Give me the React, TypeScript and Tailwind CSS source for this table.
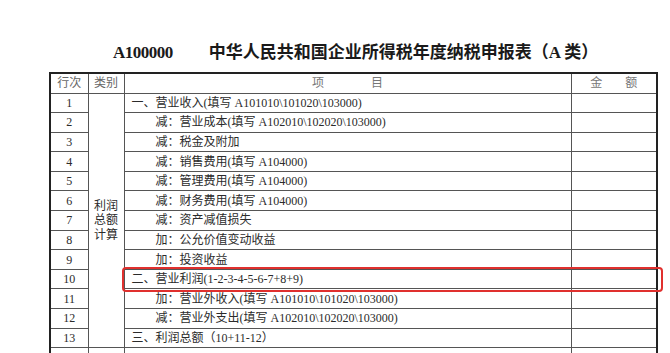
import React from 'react'

type Row = { no: number; text: string; indent?: boolean }

const rows: Row[] = [
    { no: 1, text: '一、营业收入(填写 A101010\\101020\\103000)' },
    { no: 2, text: '减：营业成本(填写 A102010\\102020\\103000)', indent: true },
    { no: 3, text: '减：税金及附加', indent: true },
    { no: 4, text: '减：销售费用(填写 A104000)', indent: true },
    { no: 5, text: '减：管理费用(填写 A104000)', indent: true },
    { no: 6, text: '减：财务费用(填写 A104000)', indent: true },
    { no: 7, text: '减：资产减值损失', indent: true },
    { no: 8, text: '加：公允价值变动收益', indent: true },
    { no: 9, text: '加：投资收益', indent: true },
    { no: 10, text: '二、营业利润(1-2-3-4-5-6-7+8+9)' },
    { no: 11, text: '加：营业外收入(填写 A101010\\101020\\103000)', indent: true },
    { no: 12, text: '减：营业外支出(填写 A102010\\102020\\103000)', indent: true },
    { no: 13, text: '三、利润总额（10+11-12）' },
]

export default function App() {
    return (
        <div className="relative h-[353px] w-[670px] overflow-hidden bg-white font-['Liberation_Serif','Noto_Sans_CJK_SC',serif] text-[#2b2b2b]">
            {/* title */}
            <div className="flex items-center gap-[36px] pl-[113px] pt-[43px] pb-[9px] leading-[20px] font-bold text-[#1a1a1a]">
                <span className="text-[17px] tracking-[-0.5px]">A100000</span>
                <span className="text-[17px]">中华人民共和国企业所得税年度纳税申报表（A 类）</span>
            </div>

            <table className="ml-[49px] w-[607px] table-fixed border-collapse border-2 border-[#222] text-[12px]">
                <colgroup>
                    <col className="w-[38px]" />
                    <col className="w-[36px]" />
                    <col className="w-[447px]" />
                    <col className="w-[86px]" />
                </colgroup>
                <thead>
                    <tr className="h-[20px] text-[#666]">
                        <th className="border border-[#555] p-0 font-normal">行次</th>
                        <th className="border border-[#555] p-0 font-normal">类别</th>
                        <th className="border border-[#555] p-0 font-normal text-[#777]">
                            <div className="flex justify-center gap-[47px]">
                                <span>项</span>
                                <span>目</span>
                            </div>
                        </th>
                        <th className="border border-[#555] p-0 font-normal text-[#777]">
                            <div className="flex justify-center gap-[23px]">
                                <span>金</span>
                                <span>额</span>
                            </div>
                        </th>
                    </tr>
                </thead>
                <tbody>
                    {rows.map((r, i) => (
                        <tr key={r.no} className="h-[19.6px]">
                            <td className="border border-[#555] p-0 text-center leading-none">{r.no}</td>
                            {i === 0 && (
                                <td rowSpan={13} className="border border-[#555] p-0 text-center align-middle leading-[14.5px]">
                                    利润<br />总额<br />计算
                                </td>
                            )}
                            <td className={`border border-[#555] py-0 pr-0 leading-none whitespace-nowrap ${r.indent ? 'pl-[31px]' : 'pl-[7px]'}`}>
                                {r.text}
                            </td>
                            <td className="border border-[#555] p-0"></td>
                        </tr>
                    ))}
                    <tr className="h-[19.6px]">
                        <td className="border border-[#555] p-0"></td>
                        <td className="border border-[#555] p-0"></td>
                        <td className="border border-[#555] p-0"></td>
                        <td className="border border-[#555] p-0"></td>
                    </tr>
                </tbody>
            </table>

            {/* highlight around row 10 */}
            <div className="absolute left-[122px] top-[267px] h-[25px] w-[541px] rounded-[4px] border-2 border-[#e0302e]" />
        </div>
    )
}
